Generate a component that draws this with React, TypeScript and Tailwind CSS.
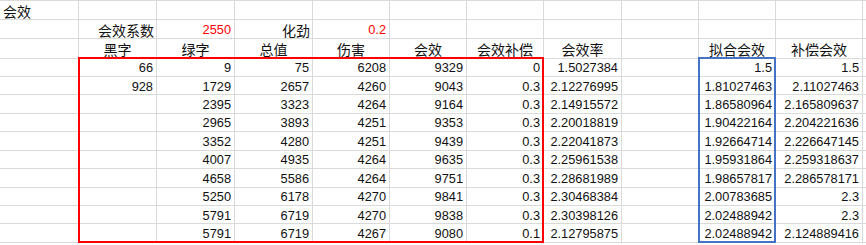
import React from "react";

const NUM = "font-['Liberation_Sans',Arial,sans-serif] text-[12.8px] leading-none";
const CJK = "font-['Noto_Sans_CJK_SC','Noto_Sans',sans-serif] text-[14px] leading-none";
const BASE = "border-r border-b border-[#dadada] flex items-end overflow-hidden whitespace-nowrap";
const GRID =
  "grid grid-cols-[79px_78px_78px_78px_77px_77px_77px_78px_77px_77px_87px_1fr] grid-rows-[19px_19px_19.5px_repeat(10,18.45px)]";

type Row = string[];

const data: Row[] = [
  ["66", "9", "75", "6208", "9329", "0", "1.5027384", "", "1.5", "1.5"],
  ["928", "1729", "2657", "4260", "9043", "0.3", "2.12276995", "", "1.81027463", "2.11027463"],
  ["", "2395", "3323", "4264", "9164", "0.3", "2.14915572", "", "1.86580964", "2.165809637"],
  ["", "2965", "3893", "4251", "9353", "0.3", "2.20018819", "", "1.90422164", "2.204221636"],
  ["", "3352", "4280", "4251", "9439", "0.3", "2.22041873", "", "1.92664714", "2.226647145"],
  ["", "4007", "4935", "4264", "9635", "0.3", "2.25961538", "", "1.95931864", "2.259318637"],
  ["", "4658", "5586", "4264", "9751", "0.3", "2.28681989", "", "1.98657817", "2.286578171"],
  ["", "5250", "6178", "4270", "9841", "0.3", "2.30468384", "", "2.00783685", "2.3"],
  ["", "5791", "6719", "4270", "9838", "0.3", "2.30398126", "", "2.02488942", "2.3"],
  ["", "5791", "6719", "4267", "9080", "0.1", "2.12795875", "", "2.02488942", "2.124889416"],
];

const headers = ["黑字", "绿字", "总值", "伤害", "会效", "会效补偿", "会效率", "", "拟合会效", "补偿会效"];

function Empty() {
  return <div className={BASE} />;
}

function Filler() {
  return <div className="border-b border-[#dadada]" />;
}

export default function App() {
  return (
    <div className="w-[866px] h-[245px] bg-white overflow-hidden text-[#111]">
      <div className="relative">
        <div className={`${GRID} border-t border-[#dadada]`}>
          {/* Row 1 */}
          <div className={`${BASE} ${CJK} pl-[3px] pb-[1px] overflow-visible`}>会效</div>
          <Empty /><Empty /><Empty /><Empty /><Empty /><Empty /><Empty /><Empty /><Empty /><Empty />
          <Filler />

          {/* Row 2 */}
          <Empty />
          <div className={`${BASE} ${CJK} justify-end pr-[2px] pb-[1px]`}>会效系数</div>
          <div className={`${BASE} ${NUM} justify-end pr-[3px] pb-[1px] text-[#ff0000]`}>2550</div>
          <div className={`${BASE} ${CJK} justify-end pr-[2px] pb-[1px]`}>化劲</div>
          <div className={`${BASE} ${NUM} justify-end pr-[3px] pb-[1px] text-[#ff0000]`}>0.2</div>
          <Empty /><Empty /><Empty /><Empty /><Empty /><Empty />
          <Filler />

          {/* Row 3 */}
          <Empty />
          {headers.map((h, i) => (
            <div key={i} className={`${BASE} ${CJK} justify-center pb-[2px]`}>{h}</div>
          ))}
          <Filler />

          {/* Data rows */}
          {data.map((r, ri) => (
            <React.Fragment key={ri}>
              <Empty />
              {r.map((v, ci) => (
                <div key={ci} className={`${BASE} ${NUM} justify-end pr-[3px] pb-[1px]`}>{v}</div>
              ))}
              <Filler />
            </React.Fragment>
          ))}
        </div>

        {/* Highlight rectangles overlay */}
        <div className={`${GRID} absolute inset-0 border-t border-transparent pointer-events-none`}>
          <div className="col-start-2 col-end-8 row-start-4 row-end-14 ml-[-1px] mt-[-1.5px] border-2 border-[#ff0000]" />
          <div className="col-start-10 col-end-11 row-start-4 row-end-14 ml-[-1px] mt-[-1.5px] border-2 border-[#4472c4]" />
        </div>
      </div>
    </div>
  );
}
